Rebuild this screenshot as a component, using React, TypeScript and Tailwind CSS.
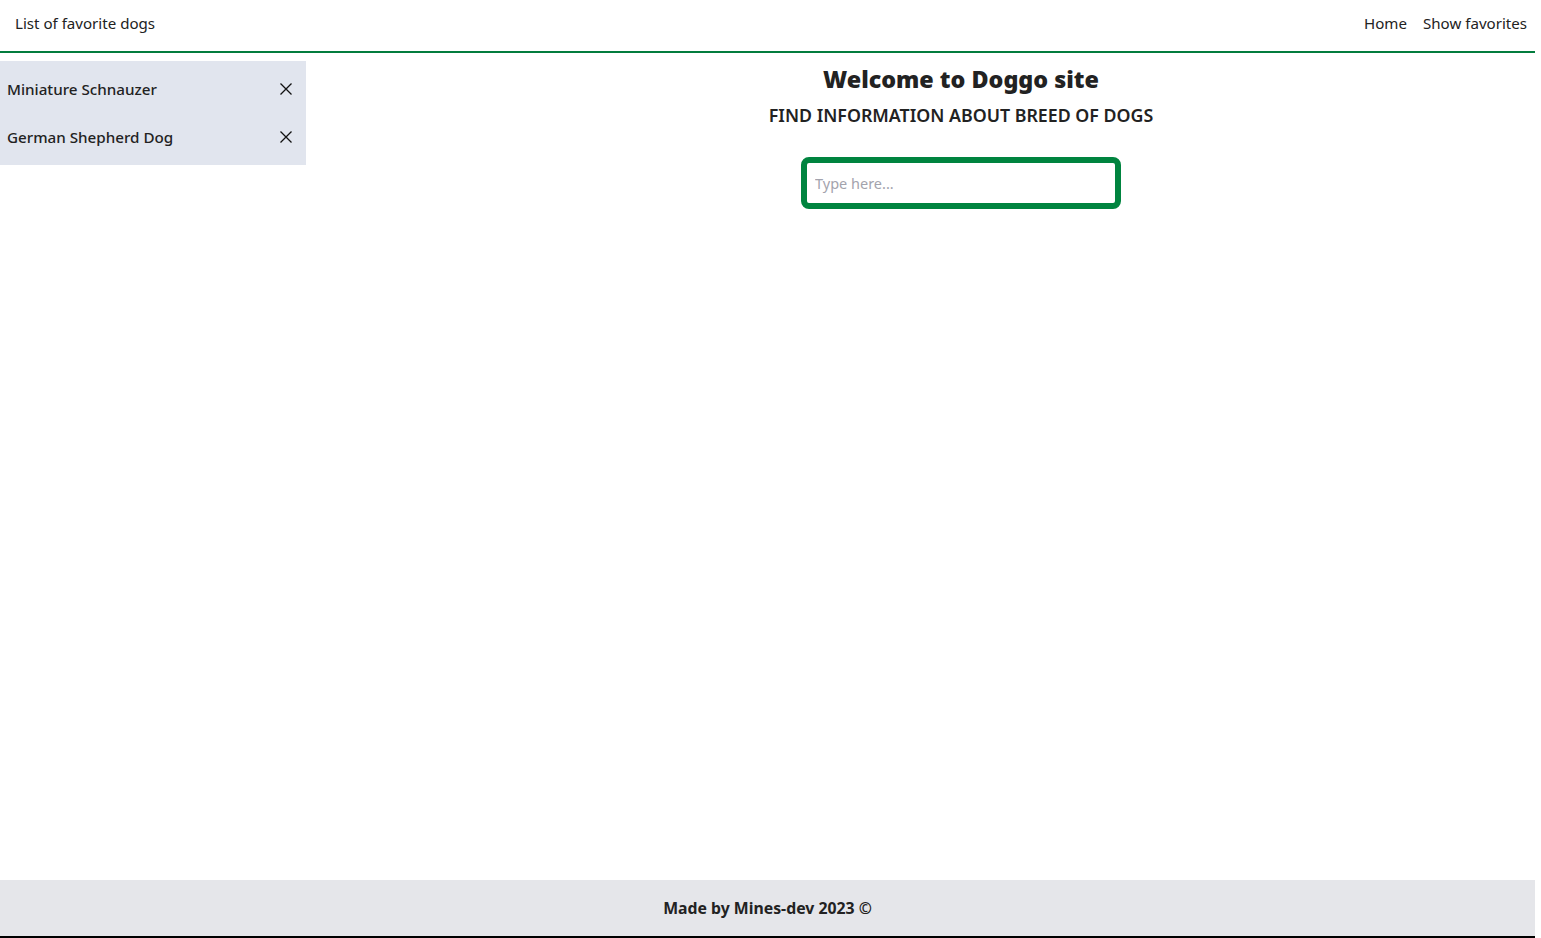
import React from "react";

function XIcon() {
  return (
    <svg width="14" height="14" viewBox="0 0 14 14" fill="none" stroke="#111" strokeWidth="1.3">
      <path d="M1.5 1.5 L12.5 12.5 M12.5 1.5 L1.5 12.5" />
    </svg>
  );
}

export default function App() {
  const favs = ["Miniature Schnauzer", "German Shepherd Dog"];
  return (
    <div
      className="w-[1535px] min-h-screen flex flex-col bg-white text-[#222]"
      style={{ fontFamily: '"Segoe UI", "Noto Sans", "Open Sans", sans-serif' }}
    >
      <header className="h-[53px] flex items-center justify-between px-[15px] pr-[8px] border-b-2 border-[#037c3e] pb-[4px]">
        <span className="text-[15.1px]">List of favorite dogs</span>
        <nav className="flex gap-[16px] text-[15.1px]">
          <span>Home</span>
          <span>Show favorites</span>
        </nav>
      </header>
      <div className="flex flex-1 pt-[8px]">
        <aside className="w-[306px] self-start bg-[#e1e5ee] py-[4px]">
          {favs.map((f) => (
            <div key={f} className="h-[48px] flex items-center justify-between pl-[7px] pr-[13px]">
              <span className="text-[15.2px] font-medium">{f}</span>
              <XIcon />
            </div>
          ))}
        </aside>
        <main className="flex-1 ml-[81px] flex flex-col items-center pt-[1px]">
          <h1 className="text-[23.3px] font-black leading-[34px]">Welcome to Doggo site</h1>
          <h2 className="text-[17.8px] font-semibold leading-[24px] mt-[7px]">FIND INFORMATION ABOUT BREED OF DOGS</h2>
          <input
            className="mt-[30px] w-[320px] h-[52px] border-[6px] border-[#00843f] rounded-[8px] px-[8px] text-[14.5px] outline-none placeholder:text-[#a3a3ad]"
            placeholder="Type here..."
          />
        </main>
      </div>
      <footer className="h-[58px] bg-[#e5e6ea] border-b-2 border-black flex items-center justify-center pt-[2px]">
        <span className="text-[15.8px] font-bold">Made by Mines-dev 2023 ©</span>
      </footer>
    </div>
  );
}
